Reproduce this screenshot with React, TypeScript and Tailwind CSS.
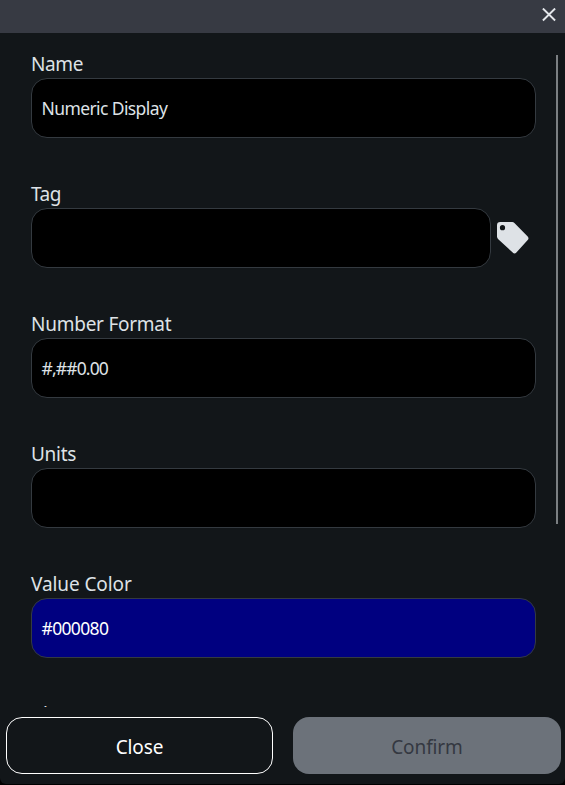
import React from "react";

type FieldProps = {
  label: string;
  tracking: string;
  value?: string;
  valueClass?: string;
  inputClass?: string;
  children?: React.ReactNode;
};

function Field({ label, tracking, value = "", valueClass = "", inputClass = "bg-black text-[#dee2e6]", children }: FieldProps) {
  return (
    <div className="h-[130px] shrink-0">
      <div className={`h-7 whitespace-nowrap text-[19px] leading-7 text-[#dee2e6] ${tracking}`}>{label}</div>
      <div className="flex items-center">
        <div className={`flex h-[60px] min-w-0 flex-1 items-center rounded-[16px] border border-[#343a40] px-[9.5px] text-[17.5px] ${inputClass}`}>
          <span className={`whitespace-nowrap ${valueClass}`}>{value}</span>
        </div>
        {children}
      </div>
    </div>
  );
}

export default function App() {
  return (
    <div className="h-[785px] w-[565px] overflow-hidden bg-black font-['Noto_Sans',sans-serif]">
      <div className="flex h-[784px] flex-col overflow-hidden rounded-b-[6px] bg-[#121619]">
        <header className="flex h-[33px] shrink-0 items-start justify-end bg-[#373a43] pr-[9px] pt-2">
          <svg width="14" height="14" viewBox="0 0 14 14" stroke="#e4e7eb" strokeWidth="1.9" aria-label="Close">
            <path d="M.9 .5 13.1 12.5M13.1 .5 .9 12.5" />
          </svg>
        </header>
        <main className="flex h-[674px] shrink-0 overflow-hidden">
          <div className="flex w-[536px] shrink-0 flex-col pl-[31px] pt-[17px]">
            <Field label="Name" tracking="tracking-[-0.4px]" value="Numeric Display" valueClass="tracking-[-0.6px]" />
            <Field label="Tag" tracking="tracking-[-0.5px]">
              <div className="flex w-[45px] justify-end pr-[7px]">
                <svg width="32" height="32" viewBox="0 0 32 32" fill="#dee2e6" aria-label="Select tag">
                  <path fillRule="evenodd" d="M3.2 0h12q1.3 0 2.2.9l13.3 13.6q1.6 1.8 0 3.6L19.4 30.6q-1.9 1.8-3.7 0L1 16.9q-1-1-1-2.3V3.2Q0 0 3.2 0Zm2.3 3.1a2.6 2.6 0 1 0 0 5.2 2.6 2.6 0 0 0 0-5.2Z" />
                </svg>
              </div>
            </Field>
            <Field label="Number Format" tracking="tracking-[-0.25px]" value="#,##0.00" valueClass="tracking-[-0.85px]" />
            <Field label="Units" tracking="tracking-[-0.3px]" />
            <Field
              label="Value Color"
              tracking="tracking-[-0.1px]"
              value="#000080"
              valueClass="tracking-[-0.65px]"
              inputClass="bg-[#000080] text-white"
            />
            <Field label="Alarm" tracking="tracking-[-0.1px]" />
          </div>
          <div className="ml-5 mt-[22px] h-[469px] w-0.5 bg-[#7b7f82]" />
        </main>
        <footer className="flex gap-5 pl-1.5 pr-1 pt-2.5 text-[19px] tracking-[-0.1px]">
          <button className="h-[57px] w-[267px] rounded-[16px] border border-white pt-1 text-white">Close</button>
          <button disabled className="h-[57px] w-[268px] rounded-[16px] bg-[#6c727a] pt-1 text-[#343841]">
            Confirm
          </button>
        </footer>
      </div>
    </div>
  );
}
